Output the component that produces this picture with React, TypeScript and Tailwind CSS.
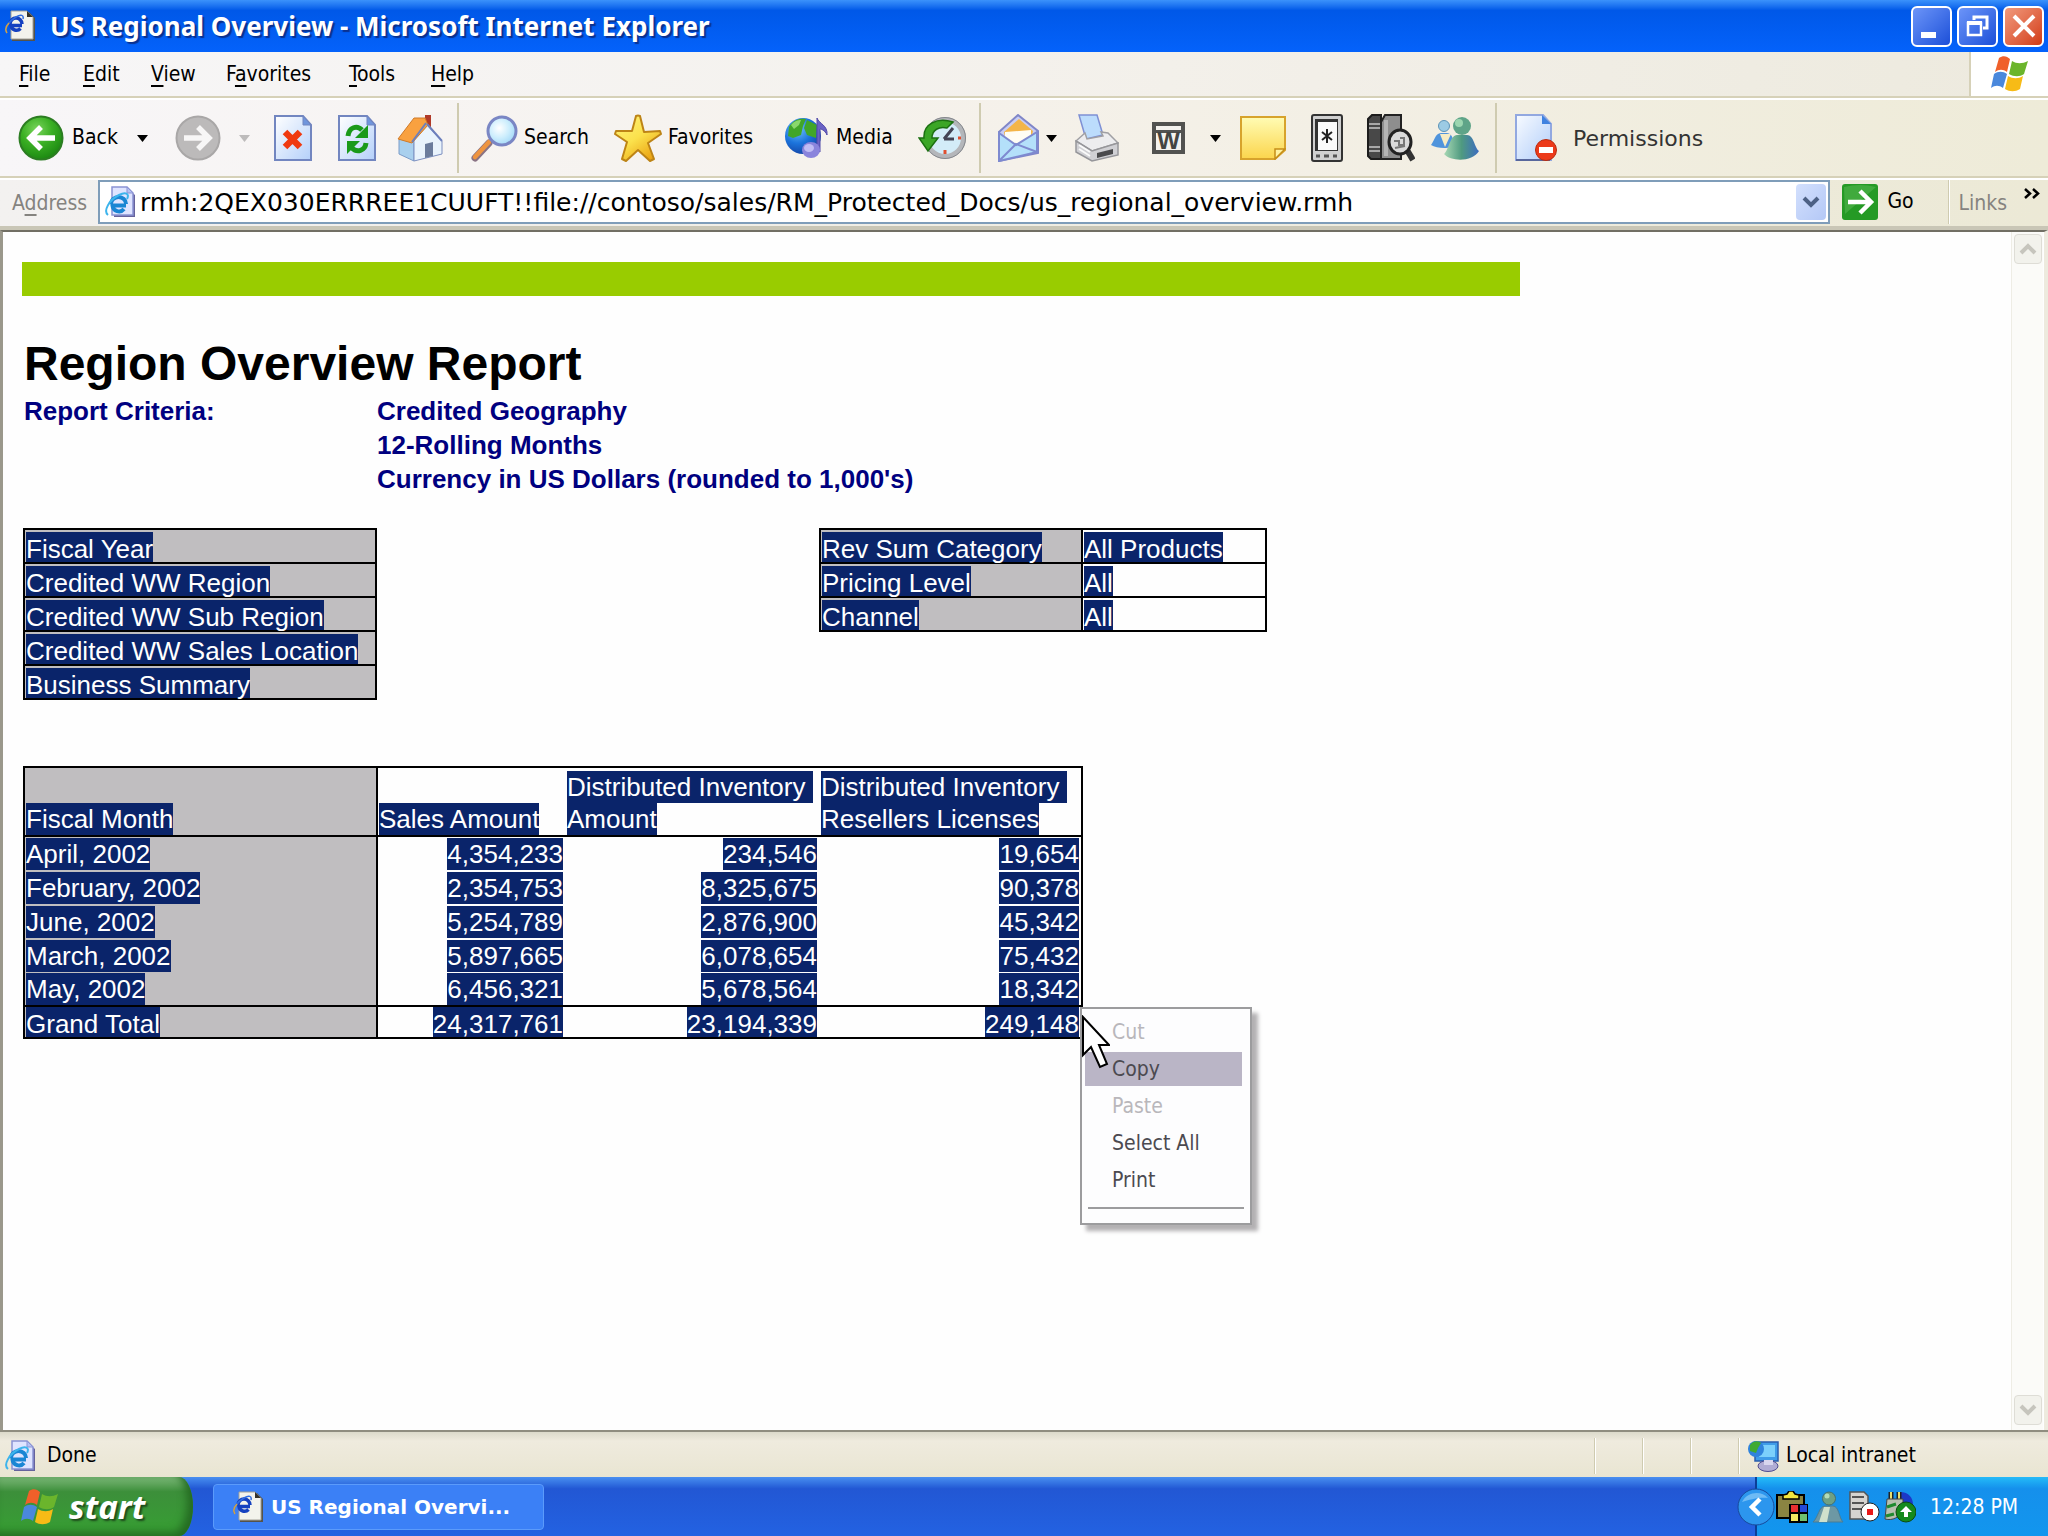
import React from "react";
import { clsx } from "clsx";

const MENU_ITEMS = [
    { before: "", key: "F", after: "ile", width: "w-[64px]" },
    { before: "", key: "E", after: "dit", width: "w-[68px]" },
    { before: "", key: "V", after: "iew", width: "w-[75px]" },
    { before: "F", key: "a", after: "vorites", width: "w-[123px]" },
    { before: "", key: "T", after: "ools", width: "w-[82px]" },
    { before: "", key: "H", after: "elp", width: "w-[64px]" },
];

const CRITERIA = ["Credited Geography", "12-Rolling Months", "Currency in US Dollars (rounded to 1,000's)"];

const LEFT_FILTERS = [
    "Fiscal Year",
    "Credited WW Region",
    "Credited WW Sub Region",
    "Credited WW Sales Location",
    "Business Summary",
];

const RIGHT_FILTERS = [
    { name: "Rev Sum Category", value: "All Products" },
    { name: "Pricing Level", value: "All" },
    { name: "Channel", value: "All" },
];

const MONTHS = [
    { month: "April, 2002", values: ["4,354,233", "234,546", "19,654"] },
    { month: "February, 2002", values: ["2,354,753", "8,325,675", "90,378"] },
    { month: "June, 2002", values: ["5,254,789", "2,876,900", "45,342"] },
    { month: "March, 2002", values: ["5,897,665", "6,078,654", "75,432"] },
    { month: "May, 2002", values: ["6,456,321", "5,678,564", "18,342"] },
];

const TOTALS = ["24,317,761", "23,194,339", "249,148"];

const CONTEXT_ITEMS = [
    { name: "Cut", disabled: true },
    { name: "Copy", active: true },
    { name: "Paste", disabled: true },
    { name: "Select All" },
    { name: "Print" },
];

type IconProps = { className?: string };

function PageIcon({ className }: IconProps) {
    return (
        <svg viewBox="0 0 32 32" className={className} aria-hidden="true">
            <path d="M10 3h14l7 6v22H10z" fill="#66639c" />
            <path d="M8 1h15l6 6v22H8z" fill="#dfe4ff" stroke="#8b93d4" strokeWidth="1.500" />
            <path d="M23 1v6h6z" fill="#b4c2f4" stroke="#8b93d4" />
            <path d="M22 19.500H8.500a6.500 6.500 0 0 0 11.500 3.500" fill="none" stroke="#1a86d4" strokeWidth="4" />
            <path d="M7 18a7.500 7 0 0 1 15 0" fill="none" stroke="#1a86d4" strokeWidth="4" />
            <path d="M4 29C-1 25 5 14 15 9c6-3 11-2 8 4" fill="none" stroke="#3db4ec" strokeWidth="2" />
        </svg>
    );
}

function WindowPageIcon({ className }: IconProps) {
    return (
        <svg viewBox="0 0 32 32" className={className} aria-hidden="true">
            <path d="M8 2h17l6 6v23H8z" fill="#55534a" />
            <path d="M7 1h16l6 6v22H7z" fill="#f3f3ec" stroke="#a3a198" />
            <path d="M23 1v6h6z" fill="#33322c" />
            <path d="M18 15.500H7a5.500 5.500 0 0 0 9.500 3" fill="none" stroke="#1541c0" strokeWidth="3.500" />
            <path d="M6 14a6 6 0 0 1 12 0" fill="none" stroke="#1541c0" strokeWidth="3.500" />
            <path d="M3 23C-1 19 5 11 12 7c5-3 8-2 7 2" fill="none" stroke="#2f6ce0" strokeWidth="1.500" />
            <path d="M3 23C1 20 2 16 5 13" fill="none" stroke="#d2a244" strokeWidth="1.500" />
        </svg>
    );
}

function FlagIcon({ className }: IconProps) {
    return (
        <svg viewBox="0 0 40 38" className={className} aria-hidden="true">
            <path d="M9 3c4-3 8-2 11 1l-3 13c-4-3-8-3-12 0z" fill="#f0602a" />
            <path d="M22 6c5 3 10 3 16 0l-4 13c-4 3-10 3-15 0z" fill="#6bb52c" />
            <path d="M4 19c4-3 9-3 13 0l-4 14c-4-3-8-3-12 0z" fill="#4a88dc" />
            <path d="M18 21c5 3 10 3 15 0l-3 13c-5 3-10 3-15 0z" fill="#f7bb16" />
        </svg>
    );
}

function BackIcon() {
    return (
        <svg viewBox="0 0 46 46" className="size-[46px] shrink-0" aria-hidden="true">
            <defs>
                <radialGradient id="backFill" cx="0.400" cy="0.300" r="0.700">
                    <stop offset="0" stopColor="#7ad45c" />
                    <stop offset="0.500" stopColor="#3bb024" />
                    <stop offset="1" stopColor="#1d8a12" />
                </radialGradient>
            </defs>
            <circle cx="23" cy="23" r="21.500" fill="url(#backFill)" stroke="#2c7d22" strokeWidth="2" />
            <path d="M37 23H13M23 12 12 23l11 11" fill="none" stroke="#fff" strokeWidth="5.500" />
        </svg>
    );
}

function ForwardIcon() {
    return (
        <svg viewBox="0 0 46 46" className="size-[46px] shrink-0" aria-hidden="true">
            <circle cx="23" cy="23" r="21.500" fill="#bcbaba" stroke="#a9a7a7" strokeWidth="2" />
            <path d="M9 23h24M23 12l11 11-11 11" fill="none" stroke="#f7f6f6" strokeWidth="5.500" />
        </svg>
    );
}

function SheetShape({ id }: { id: string }) {
    return (
        <>
            <defs>
                <linearGradient id={id} x1="0" y1="0" x2="1" y2="1">
                    <stop offset="0" stopColor="#fff" />
                    <stop offset="1" stopColor="#b4d0fa" />
                </linearGradient>
            </defs>
            <path d="M1 1h28l8 9v35H1z" fill={`url(#${id})`} stroke="#7286c0" strokeWidth="2" />
            <path d="M29 1v9h8z" fill="#6f95dc" stroke="#7286c0" />
        </>
    );
}

function StopIcon() {
    return (
        <svg viewBox="0 0 38 46" className="h-[46px] w-[38px]" aria-hidden="true">
            <SheetShape id="stopSheet" />
            <path d="m11 17 15 15M26 17 11 32" stroke="#f03a10" strokeWidth="6.500" />
        </svg>
    );
}

function RefreshIcon() {
    return (
        <svg viewBox="0 0 38 46" className="h-[46px] w-[38px]" aria-hidden="true">
            <SheetShape id="refreshSheet" />
            <path d="M10 21c1-9 9-11 14-6" fill="none" stroke="#1a9a1a" strokeWidth="5" />
            <path d="M30 10v13H17z" fill="#1a9a1a" />
            <path d="M28 28c-1 8-9 10-14 5" fill="none" stroke="#1a9a1a" strokeWidth="5" />
            <path d="M9 39V26h13z" fill="#1a9a1a" />
        </svg>
    );
}

function HomeIcon() {
    return (
        <svg viewBox="0 0 46 48" className="h-12 w-[46px]" aria-hidden="true">
            <path d="M28 1h6v16h-6z" fill="#b03a28" />
            <path d="M2 26v14l15 7V27L9 20z" fill="#a9d0ee" stroke="#7c9cc8" />
            <path d="M17 26 30 11l15 16v13l-28 7z" fill="#e9f3fc" stroke="#7c8fc0" />
            <path d="M17 4h11l3 7-16 18L1 25z" fill="#f9a140" stroke="#cf7a28" />
            <path d="m29 9-14 19M30 10l15 17" stroke="#6c7fbc" strokeWidth="2" fill="none" />
            <path d="M28 30l8-2v14l-8 2z" fill="#6b7c9c" />
        </svg>
    );
}

function SearchIcon() {
    return (
        <svg viewBox="0 0 47 48" className="h-12 w-[47px] shrink-0" aria-hidden="true">
            <defs>
                <radialGradient id="lensFill" cx="0.400" cy="0.400" r="0.700">
                    <stop offset="0" stopColor="#fff" />
                    <stop offset="0.500" stopColor="#cdeefd" />
                    <stop offset="1" stopColor="#9ad4f6" />
                </radialGradient>
            </defs>
            <path d="M4 44 18 29" stroke="#8a7384" strokeWidth="7" strokeLinecap="round" />
            <path d="M4 43 18 28" stroke="#ee9440" strokeWidth="4.500" strokeLinecap="round" />
            <circle cx="31" cy="17" r="14" fill="url(#lensFill)" stroke="#7a86c4" strokeWidth="3" />
        </svg>
    );
}

function StarIcon() {
    return (
        <svg viewBox="0 0 48 48" className="size-12 shrink-0" aria-hidden="true">
            <defs>
                <linearGradient id="starFill" x1="0" y1="0" x2="0.700" y2="1">
                    <stop offset="0" stopColor="#fff27c" />
                    <stop offset="0.550" stopColor="#fbe14c" />
                    <stop offset="1" stopColor="#eba414" />
                </linearGradient>
            </defs>
            <path
                d="M22 2q2-1 4 0l4 16 16-1 1 3-13 9 6 16-4 2-12-11-12 11-4-2 5-17L1 20l1-3h16z"
                fill="url(#starFill)"
                stroke="#bd8416"
                strokeWidth="2"
                strokeLinejoin="round"
            />
        </svg>
    );
}

function MediaIcon() {
    return (
        <svg viewBox="0 0 46 44" className="h-11 w-[46px] shrink-0" aria-hidden="true">
            <defs>
                <radialGradient id="globeFill" cx="0.350" cy="0.300" r="0.800">
                    <stop offset="0" stopColor="#72c4fa" />
                    <stop offset="0.500" stopColor="#1c74dc" />
                    <stop offset="1" stopColor="#123c9c" />
                </radialGradient>
            </defs>
            <circle cx="19" cy="20" r="18" fill="url(#globeFill)" />
            <path d="M5 11C10 3 16 2 22 3l-3 7-2 9-8 3-5-2zM23 4l10 5-1 13-9-3-3-7z" fill="#41a628" />
            <path d="M7 9c3-4 7-5 10-5l-2 5-5 4z" fill="#8ad86c" />
            <path d="M33 34V2c2 6 11 7 10 17-2-5-6-6-7-6v23z" fill="#6a62c4" stroke="#5048a8" />
            <ellipse cx="27" cy="34" rx="9" ry="8" fill="#8a84dc" />
            <ellipse cx="25" cy="32" rx="5" ry="4" fill="#c0bcf4" />
        </svg>
    );
}

function HistoryIcon() {
    return (
        <svg viewBox="0 0 48 46" className="h-[46px] w-12" aria-hidden="true">
            <circle cx="27" cy="23" r="18.500" fill="#d3ecf8" stroke="#b4b6ba" strokeWidth="5" />
            <circle cx="27" cy="23" r="20.500" fill="none" stroke="#85878c" strokeWidth="1" />
            <path d="m26 24 9-11M26 24h10" stroke="#445" strokeWidth="3" />
            <path d="M27 35v4M40 23h3" stroke="#e05030" strokeWidth="3" />
            <path d="M35 7C19 2 5 9 6 23H1l9 13 10-13h-6c0-8 7-12 15-10z" fill="#3ba626" stroke="#1c7012" strokeWidth="1.500" />
        </svg>
    );
}

function MailIcon() {
    return (
        <svg viewBox="0 0 41 48" className="h-12 w-[41px]" aria-hidden="true">
            <path d="M1 18 20 1l20 16v22L1 47z" fill="#c9cdf2" stroke="#8086c8" strokeWidth="2" />
            <path d="M6 18 21 5l14 12-2 8-25 3z" fill="#f4b548" />
            <path d="M7 18l26-2v9l-14 7-12-6z" fill="#fffdf4" />
            <path d="M1 19l17 12 21-13v20L1 47z" fill="#b4e0fa" stroke="#7e8ad0" strokeWidth="2" />
            <path d="m2 46 16-16 21 8" fill="none" stroke="#7e8ad0" strokeWidth="2" />
        </svg>
    );
}

function PrinterIcon() {
    return (
        <svg viewBox="0 0 44 48" className="h-12 w-11" aria-hidden="true">
            <path d="M4 1h18l6 20-17 4z" fill="#bcdcfc" stroke="#7f90d4" strokeWidth="1.500" />
            <path d="M1 27 10 19l2 6 16-3-2-4 7 1 10 10-26 8z" fill="#ededef" stroke="#a0a0a4" strokeWidth="1.500" />
            <path d="M1 27v11l16 9 26-6V29l-26 8z" fill="#d0d0d4" stroke="#96969a" strokeWidth="1.500" />
            <path d="M22 39l16-4v5l-16 4z" fill="#4a4a4c" />
            <path d="M4 31l11 7M4 35l11 7" stroke="#fafafa" strokeWidth="2" />
        </svg>
    );
}

function WordIcon() {
    return (
        <svg viewBox="0 0 33 32" className="h-8 w-[33px]" aria-hidden="true">
            <path d="M0 0h33v32H0z" fill="#525250" />
            <path d="M4 4h25v4H4zM4 11h25v17H4z" fill="#f4f2ee" />
            <text x="16.500" y="27" textAnchor="middle" fontFamily="Liberation Sans" fontWeight="bold" fontSize="24" fill="#444442">
                W
            </text>
        </svg>
    );
}

function NoteIcon() {
    return (
        <svg viewBox="0 0 46 44" className="h-11 w-[46px]" aria-hidden="true">
            <defs>
                <linearGradient id="noteFill" x1="0" y1="0" x2="0" y2="1">
                    <stop offset="0" stopColor="#fffcb4" />
                    <stop offset="1" stopColor="#fbd54c" />
                </linearGradient>
            </defs>
            <path d="M1 1h44v33l-10 9H1z" fill="url(#noteFill)" stroke="#d7a32c" strokeWidth="2" />
            <path d="M35 43V33h10z" fill="#fff2a0" stroke="#c58d18" strokeWidth="1.500" />
        </svg>
    );
}

function PdaIcon() {
    return (
        <svg viewBox="0 0 32 48" className="h-12 w-8" aria-hidden="true">
            <rect x="1" y="1" width="30" height="46" rx="2" fill="#d0d0d0" stroke="#333" strokeWidth="2" />
            <path d="M4 5h23v32H4z" fill="#333" />
            <path d="M7 8h19v28H7z" fill="#fafafa" />
            <path d="M16 15v14M11 18l10 8M21 18l-10 8" stroke="#222" strokeWidth="2" />
            <path d="M5 42h4M13 42h5M22 42h4" stroke="#555" strokeWidth="3" />
        </svg>
    );
}

function ResearchIcon() {
    return (
        <svg viewBox="0 0 48 48" className="size-12" aria-hidden="true">
            <path d="M1 5l4-4h9v44H4l-3-3z" fill="#484848" stroke="#1c1c1c" strokeWidth="2" />
            <path d="M2 10h12M2 14h12M2 33h12M2 37h12" stroke="#a8a8a8" strokeWidth="2" />
            <path d="M14 8l4-7h16v44H14z" fill="#8e8e8e" stroke="#222" strokeWidth="2" />
            <path d="M19 6v36" stroke="#b4b4b4" strokeWidth="4" />
            <path d="m40 36 6 10" stroke="#333" strokeWidth="6" />
            <ellipse cx="33" cy="28" rx="11" ry="12" fill="#dadada" stroke="#222" strokeWidth="3" />
            <path d="M27 27h5v4h5v-7h-4M28 34l10-2" stroke="#777" strokeWidth="2" fill="none" />
        </svg>
    );
}

function PeopleIcon({ className }: IconProps) {
    return (
        <svg viewBox="0 0 48 44" className={className} aria-hidden="true">
            <defs>
                <linearGradient id="bodyFill" x1="0" y1="0" x2="1" y2="0">
                    <stop offset="0" stopColor="#a8d8b4" />
                    <stop offset="0.500" stopColor="#4f9a80" />
                    <stop offset="1" stopColor="#3c6cc0" />
                </linearGradient>
            </defs>
            <path d="M0 29c3-3 4-12 10-12h6c6 0 6 9 9 12-4 4-19 4-25 0z" fill="#4f94dc" />
            <circle cx="13" cy="10" r="5.500" fill="#9ccbe4" stroke="#5c94b8" />
            <path d="M9 18l5 13 6-13z" fill="#f6ecc4" />
            <path d="M13 38c5-4 6-19 13-19h10c7 0 7 12 12 16-6 11-28 11-35 3z" fill="url(#bodyFill)" />
            <circle cx="31" cy="10" r="9" fill="#5fa488" />
            <circle cx="28" cy="7" r="4" fill="#9cd6b0" />
        </svg>
    );
}

function PermissionIcon() {
    return (
        <svg viewBox="0 0 42 48" className="h-12 w-[42px]" aria-hidden="true">
            <defs>
                <linearGradient id="permSheet" x1="0" y1="0" x2="1" y2="1">
                    <stop offset="0" stopColor="#f8fbff" />
                    <stop offset="1" stopColor="#b0cdfa" />
                </linearGradient>
            </defs>
            <path d="M1 1h27l8 9v36H1z" fill="url(#permSheet)" stroke="#92a8e0" strokeWidth="2" />
            <path d="M27 1v9h9z" fill="#3f82e0" />
            <path d="M1 46h34" stroke="#58679c" strokeWidth="2" />
            <circle cx="31" cy="36" r="10.500" fill="#ec3a1a" stroke="#b82c10" />
            <path d="M24 33h14v6H24z" fill="#fff" />
        </svg>
    );
}

function Caret({ muted }: { muted?: boolean }) {
    return (
        <svg viewBox="0 0 11 7" className="h-[7px] w-[11px]" aria-hidden="true">
            <path d="M0 0h11L5.500 7z" fill={muted ? "#bdbbbb" : "#000"} />
        </svg>
    );
}

function ToolButton({ label, icon, className }: { label: string; icon: React.ReactNode; className?: string }) {
    return (
        <button type="button" className={clsx("flex shrink-0 items-center whitespace-nowrap", className)}>
            {icon}
            {label}
        </button>
    );
}

function IconButton({ label, children, className }: { label: string; children: React.ReactNode; className?: string }) {
    return (
        <button type="button" aria-label={label} className={clsx("shrink-0", className)}>
            {children}
        </button>
    );
}

function Separator({ className }: IconProps) {
    return <div className={clsx("w-[2px] shrink-0 bg-[#cfcbb0]", className)} />;
}

function TitleBar() {
    const caption = "size-[41px] rounded-md border-2 border-white flex items-center justify-center";
    return (
        <header className="flex h-[52px] shrink-0 items-center bg-linear-to-b from-[#3b92fb] via-[#0058e8] via-20% to-[#0462fb] px-1">
            <WindowPageIcon className="mr-[14px] size-8" />
            <h1 className="flex-1 font-['Noto_Sans',sans-serif] text-[26px] leading-10 font-bold whitespace-nowrap text-white [text-shadow:2px_2px_1px_#0a318f]">
                US Regional Overview - Microsoft Internet Explorer
            </h1>
            <div className="flex gap-[5px]">
                <button type="button" aria-label="Minimize" className={clsx(caption, "bg-linear-to-br from-[#6c94f8] to-[#1c4ed8]")}>
                    <svg viewBox="0 0 36 36" className="size-9" aria-hidden="true">
                        <path d="M7 24h15v6H7z" fill="#fff" />
                    </svg>
                </button>
                <button type="button" aria-label="Restore" className={clsx(caption, "bg-linear-to-br from-[#6c94f8] to-[#1c4ed8]")}>
                    <svg viewBox="0 0 36 36" className="size-9" aria-hidden="true">
                        <path d="M14 12V9h13v11h-4" fill="none" stroke="#fff" strokeWidth="3" />
                        <path d="M8 15h13v12H8z" fill="none" stroke="#fff" strokeWidth="2.500" />
                        <path d="M7 15h15" stroke="#fff" strokeWidth="4" />
                    </svg>
                </button>
                <button type="button" aria-label="Close" className={clsx(caption, "bg-linear-to-br from-[#f0997c] to-[#d2380c]")}>
                    <svg viewBox="0 0 36 36" className="size-9" aria-hidden="true">
                        <path d="m8 8 20 20M28 8 8 28" stroke="#fff" strokeWidth="4" />
                    </svg>
                </button>
            </div>
        </header>
    );
}

function MenuBar() {
    return (
        <nav aria-label="Menu" className="flex h-[46px] shrink-0 border-b-2 border-[#d6d1b8] bg-linear-to-r from-[#f7f6f7] via-[#f4f1ec] to-[#edeade] pl-[19px]">
            {MENU_ITEMS.map((item) => (
                <button key={item.key} type="button" className={clsx("shrink-0 pt-[2px] text-left", item.width)}>
                    {item.before}
                    <span className="underline decoration-2 underline-offset-4">{item.key}</span>
                    {item.after}
                </button>
            ))}
            <div className="ml-auto flex w-[79px] items-center justify-center border-l-2 border-[#d6d1b8] bg-white">
                <FlagIcon className="h-[38px] w-10" />
            </div>
        </nav>
    );
}

function Toolbar() {
    return (
        <div
            role="toolbar"
            aria-label="Standard buttons"
            className="flex h-20 shrink-0 items-center border-t-2 border-b-2 border-t-white border-b-[#d6d1b8] bg-linear-to-r from-[#f8f6f8] via-[#f5f1ea] to-[#eeebd8] pl-[18px]"
        >
            <ToolButton label="Back" icon={<BackIcon />} className="w-[107px] gap-2" />
            <IconButton label="Back history" className="mx-3">
                <Caret />
            </IconButton>
            <IconButton label="Forward" className="ml-[15px]">
                <ForwardIcon />
            </IconButton>
            <IconButton label="Forward history" className="ml-[18px]">
                <Caret muted />
            </IconButton>
            <IconButton label="Stop" className="ml-6">
                <StopIcon />
            </IconButton>
            <IconButton label="Refresh" className="ml-[26px]">
                <RefreshIcon />
            </IconButton>
            <IconButton label="Home" className="ml-[21px]">
                <HomeIcon />
            </IconButton>
            <Separator className="ml-[14px] h-[70px]" />
            <ToolButton label="Search" icon={<SearchIcon />} className="ml-3 w-[143px] gap-[6px]" />
            <ToolButton label="Favorites" icon={<StarIcon />} className="w-[170px] gap-[6px]" />
            <ToolButton label="Media" icon={<MediaIcon />} className="w-[134px] gap-[6px]" />
            <IconButton label="History">
                <HistoryIcon />
            </IconButton>
            <Separator className="ml-[13px] h-[70px]" />
            <IconButton label="Mail" className="ml-[17px]">
                <MailIcon />
            </IconButton>
            <IconButton label="Mail options" className="ml-[7px]">
                <Caret />
            </IconButton>
            <IconButton label="Print" className="ml-[18px]">
                <PrinterIcon />
            </IconButton>
            <IconButton label="Edit with Word" className="ml-[33px]">
                <WordIcon />
            </IconButton>
            <IconButton label="Edit options" className="ml-[25px]">
                <Caret />
            </IconButton>
            <IconButton label="Discuss" className="ml-[19px]">
                <NoteIcon />
            </IconButton>
            <IconButton label="Mobile device" className="ml-[25px]">
                <PdaIcon />
            </IconButton>
            <IconButton label="Research" className="ml-6">
                <ResearchIcon />
            </IconButton>
            <IconButton label="Messenger" className="ml-4">
                <PeopleIcon className="h-11 w-12" />
            </IconButton>
            <Separator className="ml-4 h-[70px]" />
            <ToolButton
                label="Permissions"
                icon={<PermissionIcon />}
                className="ml-[18px] gap-4 font-['DejaVu_Sans',sans-serif] text-[22px] text-[#333]"
            />
        </div>
    );
}

function AddressBar() {
    return (
        <form className="flex h-[52px] shrink-0 items-start border-t-2 border-b-4 border-t-white border-b-[#c9c6b6] bg-linear-to-r from-[#f3f1f0] to-[#ece9d6] pl-3">
            <label htmlFor="address" className="w-[86px] leading-[46px] text-[#85837f]">
                A<span className="underline decoration-2 underline-offset-4">d</span>dress
            </label>
            <div className="flex h-11 flex-1 items-center border-2 border-[#7f9db9] bg-white pl-1">
                <PageIcon className="size-8 shrink-0" />
                <input
                    id="address"
                    type="text"
                    defaultValue="rmh:2QEX030ERRREE1CUUFT!!file://contoso/sales/RM_Protected_Docs/us_regional_overview.rmh"
                    className="h-10 flex-1 px-1 font-['DejaVu_Sans',sans-serif] text-[25px] text-black outline-none"
                />
                <button
                    type="button"
                    aria-label="Show addresses"
                    className="mr-[2px] flex h-9 w-[30px] items-center justify-center rounded-sm bg-linear-to-br from-[#d3e0fd] to-[#b4c8f6]"
                >
                    <svg viewBox="0 0 18 12" className="h-3 w-[18px]" aria-hidden="true">
                        <path d="m2 2 7 7 7-7" fill="none" stroke="#4d6185" strokeWidth="4" />
                    </svg>
                </button>
            </div>
            <button type="submit" className="flex h-11 w-[118px] items-center gap-[9px] pl-3">
                <svg viewBox="0 0 36 36" className="size-9" aria-hidden="true">
                    <rect width="36" height="36" rx="3" fill="#259a25" />
                    <path d="M2 3q16-4 32 0L3 30z" fill="#5cba55" opacity="0.500" />
                    <path d="M6 18h22M18 7l11 11-11 11" fill="none" stroke="#fff" strokeWidth="4.500" />
                </svg>
                Go
            </button>
            <Separator className="h-11 border-r border-white" />
            <a href="#links" className="ml-2 leading-[46px] text-[#85837f]">
                Links
            </a>
            <IconButton label="More links" className="mt-2 mr-2 ml-[17px]">
                <svg viewBox="0 0 16 11" className="h-[11px] w-4" aria-hidden="true">
                    <path d="m1 1 5 4.500L1 10M9 1l5 4.500L9 10" fill="none" stroke="#000" strokeWidth="2.500" />
                </svg>
            </IconButton>
        </form>
    );
}

function Selected({ children, tall, right }: { children: React.ReactNode; tall?: boolean; right?: boolean }) {
    return (
        <span
            className={clsx(
                "block w-fit bg-[#0a246a] whitespace-pre text-white",
                tall ? "h-8 leading-8" : "h-[30px] leading-[34px]",
                right && "ml-auto"
            )}
        >
            {children}
        </span>
    );
}

function ContextMenu() {
    return (
        <div
            role="menu"
            className="absolute top-full left-full z-10 -mt-8 -ml-[3px] w-[172px] border-2 border-[#9c9c9e] bg-[#fdfdfe] px-[3px] pt-[3px] pb-[14px] font-['DejaVu_Sans_Condensed','Noto_Sans',sans-serif] text-[21px] shadow-[6px_6px_4px_#b3b1b3]"
        >
            {CONTEXT_ITEMS.map((item) => (
                <button
                    key={item.name}
                    type="button"
                    role="menuitem"
                    disabled={item.disabled}
                    className={clsx(
                        "my-[3px] block h-[34px] w-[157px] pl-[27px] text-left leading-8",
                        item.active && "bg-[#bab5c6]",
                        item.disabled ? "text-[#b9b7bb]" : "text-[#4c4a50]"
                    )}
                >
                    {item.name}
                </button>
            ))}
            <hr className="mx-[3px] mt-[10px] border-t-2 border-[#9c9c9e]" />
            <svg viewBox="0 0 28 54" className="absolute top-[6px] left-0 h-[54px] w-7" aria-hidden="true">
                <path d="M1 2v38l8-8 9 20 7-3-8-19h10z" fill="#fff" stroke="#000" strokeWidth="2" />
            </svg>
        </div>
    );
}

function Report() {
    return (
        <article className="flex-1 overflow-hidden pt-[30px] pl-[19px] font-['Liberation_Sans',Arial,sans-serif] text-[26px]">
            <div className="h-[34px] w-[1498px] max-w-full bg-[#9c0]" />
            <h2 className="mt-10 pl-[2px] text-[48px] leading-[56px] font-bold text-black">Region Overview Report</h2>
            <dl className="mt-[2px] flex pl-[2px] leading-[34px] font-bold text-[#000080]">
                <dt className="w-[353px]">Report Criteria:</dt>
                {/* one term, three stacked values */}
                <dd>
                    {CRITERIA.map((line) => (
                        <div key={line}>{line}</div>
                    ))}
                </dd>
            </dl>

            <div className="mt-8 flex items-start gap-[442px] pl-px">
                <table className="w-[354px] table-fixed border-collapse">
                    <tbody>
                        {LEFT_FILTERS.map((name) => (
                            <tr key={name}>
                                <th scope="row" className="h-[34px] border-2 border-black bg-[#c0bec0] p-0 pl-px align-bottom font-normal">
                                    <Selected>{name}</Selected>
                                </th>
                            </tr>
                        ))}
                    </tbody>
                </table>
                <table className="w-[448px] table-fixed border-collapse">
                    <colgroup>
                        <col className="w-[262px]" />
                        <col />
                    </colgroup>
                    <tbody>
                        {RIGHT_FILTERS.map((row) => (
                            <tr key={row.name}>
                                <th scope="row" className="h-[34px] border-2 border-black bg-[#c0bec0] p-0 pl-px align-bottom font-normal">
                                    <Selected>{row.name}</Selected>
                                </th>
                                <td className="border-2 border-black p-0 pl-px align-bottom">
                                    <Selected>{row.value}</Selected>
                                </td>
                            </tr>
                        ))}
                    </tbody>
                </table>
            </div>

            <div className="relative mt-[66px] ml-px w-fit">
                <table className="w-[1060px] table-fixed border-collapse border-2 border-black">
                    <colgroup>
                        <col className="w-[353px]" />
                        <col className="w-[190px]" />
                        <col className="w-[254px]" />
                        <col />
                    </colgroup>
                    <thead>
                        <tr className="h-[69px] border-b-2 border-black align-bottom">
                            <th scope="col" className="border-r-2 border-black bg-[#c0bec0] p-0 pl-px font-normal">
                                <Selected tall>Fiscal Month</Selected>
                            </th>
                            <th scope="col" className="p-0 pl-px font-normal">
                                <Selected tall>Sales Amount</Selected>
                            </th>
                            <th scope="col" className="p-0 font-normal">
                                <Selected tall>{"Distributed Inventory "}</Selected>
                                <Selected tall>Amount</Selected>
                            </th>
                            <th scope="col" className="p-0 font-normal">
                                <Selected tall>{"Distributed Inventory "}</Selected>
                                <Selected tall>Resellers Licenses</Selected>
                            </th>
                        </tr>
                    </thead>
                    <tbody>
                        {MONTHS.map((row) => (
                            <tr key={row.month} className="h-[34px] align-bottom">
                                <th scope="row" className="border-r-2 border-black bg-[#c0bec0] p-0 pl-px font-normal">
                                    <Selected tall>{row.month}</Selected>
                                </th>
                                {row.values.map((value, i) => (
                                    <td key={value} className={clsx("p-0", i === 2 ? "pr-[2px]" : "pr-1")}>
                                        <Selected tall right>
                                            {value}
                                        </Selected>
                                    </td>
                                ))}
                            </tr>
                        ))}
                    </tbody>
                    <tfoot>
                        <tr className="h-8 border-t-2 border-black align-bottom">
                            <th scope="row" className="border-r-2 border-black bg-[#c0bec0] p-0 pl-px font-normal">
                                <Selected>Grand Total</Selected>
                            </th>
                            {TOTALS.map((value, i) => (
                                <td key={value} className={clsx("p-0", i === 2 ? "pr-[2px]" : "pr-1")}>
                                    <Selected right>{value}</Selected>
                                </td>
                            ))}
                        </tr>
                    </tfoot>
                </table>
                <ContextMenu />
            </div>
        </article>
    );
}

function ScrollButton({ up }: { up?: boolean }) {
    return (
        <button
            type="button"
            aria-label={up ? "Scroll up" : "Scroll down"}
            className="flex h-[30px] w-[28px] items-center justify-center rounded-sm border border-[#deddd6] bg-[#f2f2ec]"
        >
            <svg viewBox="0 0 18 12" className="h-3 w-[18px]" aria-hidden="true">
                <path d={up ? "m2 10 7-7 7 7" : "m2 2 7 7 7-7"} fill="none" stroke="#c6c5bd" strokeWidth="4" />
            </svg>
        </button>
    );
}

function StatusBar() {
    return (
        <footer className="flex h-[47px] shrink-0 items-center border-t-2 border-[#8f8d80] bg-linear-to-b from-[#dcdacb] via-[#efebde] via-20% to-[#e9e5d2] pt-[2px] pl-1">
            <PageIcon className="size-8" />
            <span className="ml-[11px] flex-1">Done</span>
            <Separator className="h-9 border-r border-white" />
            <Separator className="ml-[46px] h-9 border-r border-white" />
            <Separator className="ml-[46px] h-9 border-r border-white" />
            <Separator className="ml-[46px] h-9 border-r border-white" />
            <div className="ml-[7px] flex w-[301px] items-center gap-[7px]">
                <svg viewBox="0 0 32 32" className="size-8" aria-hidden="true">
                    <path d="M8 2h23v19H8z" fill="#3f9ce8" stroke="#2a5cac" strokeWidth="1.500" />
                    <path d="M12 5h16v12H12z" fill="#7cd0fb" />
                    <circle cx="9" cy="9" r="8" fill="#2f83dc" />
                    <path d="M3 5c4-5 9-4 11-2l-3 5-2 5-6-2z" fill="#3faa32" />
                    <ellipse cx="21" cy="26" rx="10" ry="5.500" fill="#b0acd4" stroke="#504c90" />
                    <path d="M17 20h9v5h-9z" fill="#d8d6ee" />
                </svg>
                Local intranet
            </div>
        </footer>
    );
}

function TrayIcons() {
    return (
        <div className="flex gap-1">
            <svg viewBox="0 0 32 32" className="size-8" aria-hidden="true">
                <path d="M1 4h27v23H1z" fill="#8a8442" stroke="#000" strokeWidth="2" />
                <path d="M7 8V4l4-1 2-3h4l2 3 4 1v4z" fill="#f2e640" stroke="#000" strokeWidth="1.500" />
                <path d="M13 13h19v19H13z" fill="#000" />
                <path d="M15 14h7v7h-7z" fill="#e83030" />
                <path d="M24 14h7v7h-7z" fill="#2448d8" />
                <path d="M15 23h7v7h-7z" fill="#f4e860" />
                <path d="M24 23h7v7h-7z" fill="#70c070" />
            </svg>
            <svg viewBox="0 0 32 32" className="size-8" aria-hidden="true">
                <path d="M1 31c5-4 6-16 12-16h8c6 0 6 12 10 16z" fill="#6d98a4" stroke="#4a7c94" />
                <path d="M12 16 7 31h8l3-15z" fill="#cfe0cc" />
                <circle cx="17" cy="7.500" r="6.500" fill="#6fa084" stroke="#47706c" />
                <circle cx="15" cy="5" r="2.500" fill="#b4dcb8" />
            </svg>
            <svg viewBox="0 0 32 32" className="size-8" aria-hidden="true">
                <path d="M2 1h14l4 4v23H2z" fill="#d6d4d0" stroke="#555" strokeWidth="1.500" />
                <path d="M4 6h12M4 12h12M4 18h10" stroke="#555" strokeWidth="2" />
                <circle cx="22" cy="21" r="9" fill="#fff" stroke="#222" />
                <path d="M19 18h6v6h-6z" fill="#e81818" />
            </svg>
            <svg viewBox="0 0 32 32" className="size-8" aria-hidden="true">
                <path d="M16 1c9 0 13 6 13 13H16z" fill="#1c38c8" />
                <path d="M7 1v8M15 1v8" stroke="#222" strokeWidth="5" />
                <path d="M7 1v7M15 1v7" stroke="#e8e070" strokeWidth="2" />
                <path d="M3 8h16v12c-4 6-10 10-18 8z" fill="#b8c0b0" stroke="#444" />
                <path d="M3 16l9-3M2 25l8-2" stroke="#208a30" strokeWidth="3" />
                <circle cx="22" cy="21" r="10" fill="#158a1c" stroke="#0c4c10" />
                <path d="m22 15 6 6h-4v5h-4v-5h-4z" fill="#fff" />
            </svg>
        </div>
    );
}

function Taskbar() {
    return (
        <div className="flex h-[59px] shrink-0 items-center bg-linear-to-b from-[#4a8ff0] via-[#2257d4] via-20% to-[#2362e2]">
            <button
                type="button"
                className="flex h-full w-[193px] items-center rounded-r-[14px_30px] bg-linear-to-b from-[#7bb878] via-[#3c8f3a] via-25% to-[#36a032] pl-5 font-['Noto_Sans',sans-serif] text-[33px] font-bold text-white italic shadow-[inset_-6px_-4px_8px_#256b22] [text-shadow:2px_2px_2px_#1d4a1b]"
            >
                <FlagIcon className="mr-[9px] h-[38px] w-10" />
                start
            </button>
            <button
                type="button"
                className="ml-5 flex h-[46px] w-[331px] items-center gap-[7px] rounded-sm border border-[#5b9bfb] bg-[#3b80f6] pl-[18px] font-['DejaVu_Sans',sans-serif] text-[20px] font-bold whitespace-nowrap text-white"
            >
                <WindowPageIcon className="size-8 shrink-0" />
                US Regional Overvi...
            </button>
            <div className="ml-auto flex h-full w-[293px] items-center border-l-2 border-[#0b3f98] bg-linear-to-b from-[#26bbf8] via-[#1590ec] via-20% to-[#1296ee]">
                <button type="button" aria-label="Show hidden icons" className="-ml-5 shrink-0">
                    <svg viewBox="0 0 38 38" className="size-[38px]" aria-hidden="true">
                        <circle cx="19" cy="19" r="18" fill="#2c96ee" stroke="#174a9c" />
                        <path d="M5 14C10 4 24 2 31 10 22 9 12 12 5 14z" fill="#8acaf8" opacity="0.700" />
                        <path d="m23 11-8 8 8 8" fill="none" stroke="#fff" strokeWidth="4.500" />
                    </svg>
                </button>
                <div className="ml-px">
                    <TrayIcons />
                </div>
                <time className="ml-[14px] pt-[2px] text-[21px] whitespace-nowrap text-white">12:28 PM</time>
            </div>
        </div>
    );
}

export default function App() {
    return (
        <div className="flex min-h-screen flex-col overflow-hidden bg-white font-['DejaVu_Sans_Condensed','Noto_Sans',sans-serif] text-[21px] text-black">
            <TitleBar />
            <MenuBar />
            <Toolbar />
            <AddressBar />
            <main className="flex flex-1 border-t-2 border-r-4 border-l-[3px] border-t-[#716f64] border-r-[#edeade] border-l-[#9a988b] bg-[#fefefe]">
                <Report />
                <div className="mr-px flex w-8 flex-col items-center justify-between border-l border-[#eeede5] bg-[#fbfbf8] pt-[2px] pb-[5px]">
                    <ScrollButton up />
                    <ScrollButton />
                </div>
            </main>
            <StatusBar />
            <Taskbar />
        </div>
    );
}
